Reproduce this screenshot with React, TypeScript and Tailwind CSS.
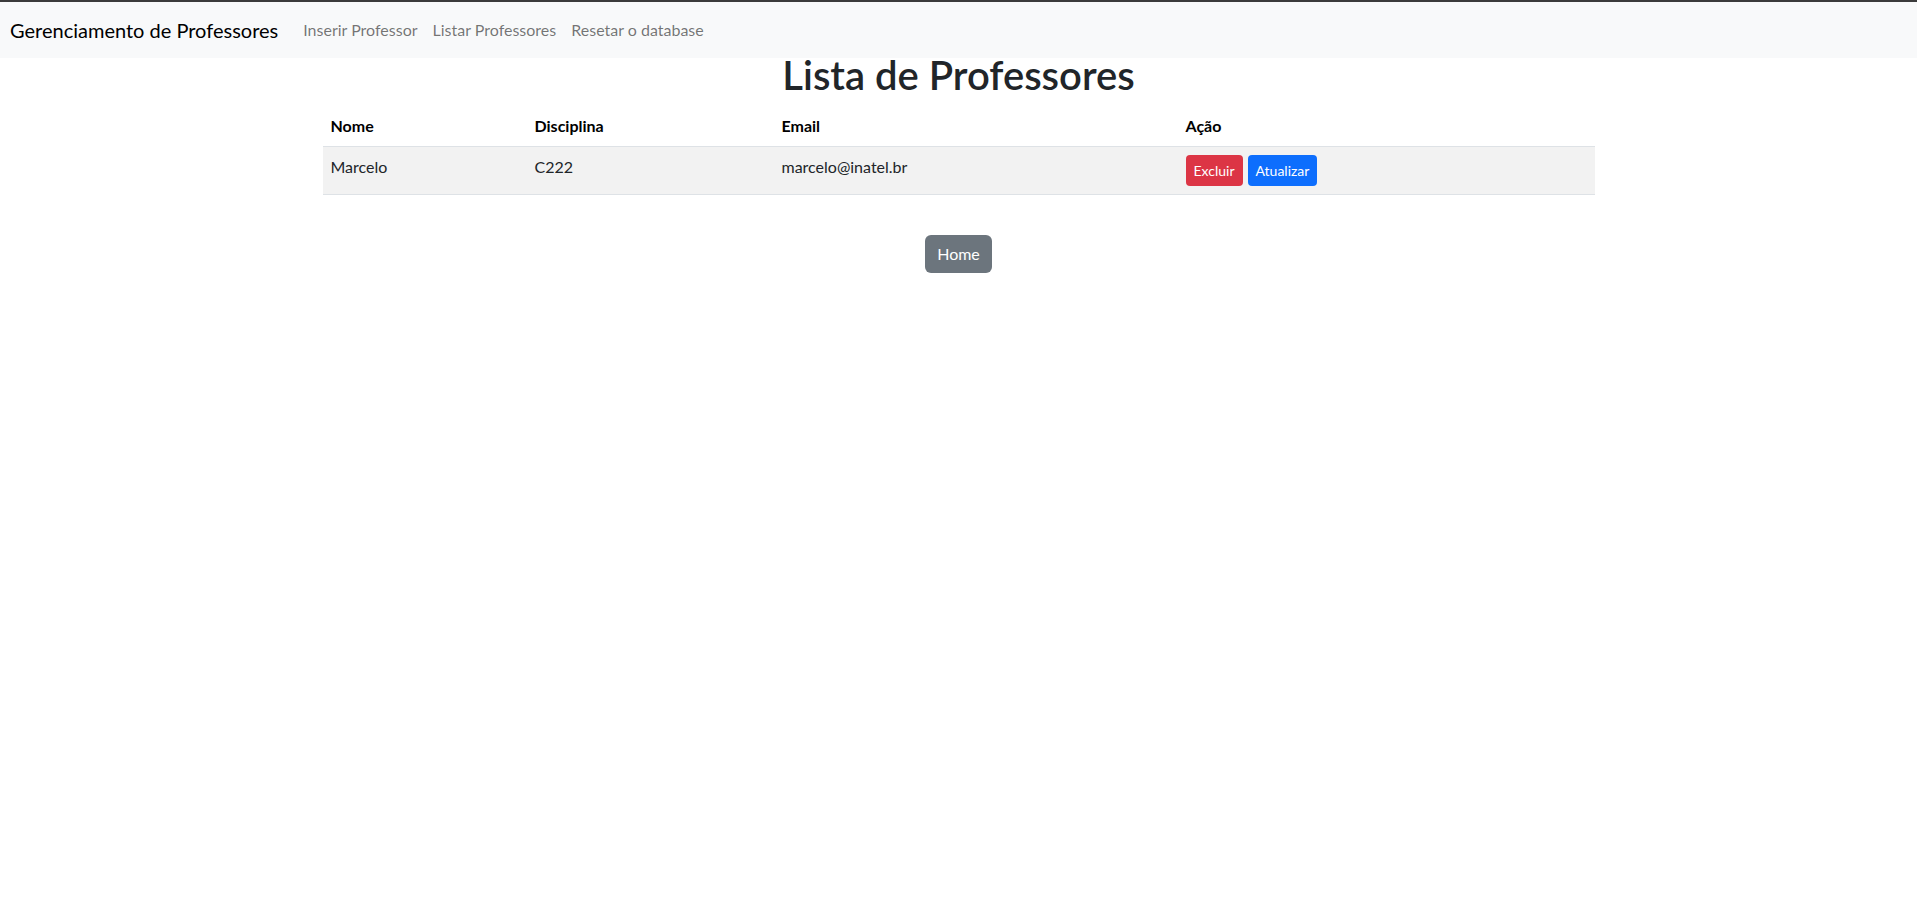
import React from 'react';

const professores = [
  { nome: 'Marcelo', disciplina: 'C222', email: 'marcelo@inatel.br' },
];

export default function App() {
  return (
    <div className="min-h-screen bg-white font-['Lato','Liberation_Sans',sans-serif] text-[#212529]">
      <nav className="h-[58px] border-t-2 border-[#3b3b3b] bg-[#f8f9fa] flex items-center px-[10px]">
        <span className="text-[20px] leading-[30px] text-black mr-[25px]">Gerenciamento de Professores</span>
        <div className="flex items-center gap-[15px] text-[16px] text-black/55">
          <a href="#">Inserir Professor</a>
          <a href="#">Listar Professores</a>
          <a href="#">Resetar o database</a>
        </div>
      </nav>

      <main className="w-[1272px] mx-auto">
        <h1 className="-mt-[7px] mb-[7px] text-center text-[40px] leading-[48px] font-semibold">Lista de Professores</h1>

        <table className="w-full border-collapse text-[16px] leading-6">
          <thead>
            <tr className="border-b border-[#dee2e6] text-black">
              <th className="w-[204px] p-2 text-left font-bold">Nome</th>
              <th className="w-[247px] p-2 text-left font-bold">Disciplina</th>
              <th className="w-[404px] p-2 text-left font-bold">Email</th>
              <th className="p-2 text-left font-bold">Ação</th>
            </tr>
          </thead>
          <tbody>
            {professores.map((p) => (
              <tr key={p.email} className="bg-[#f2f2f2] border-b border-[#dee2e6]">
                <td className="p-2 align-top">{p.nome}</td>
                <td className="p-2 align-top">{p.disciplina}</td>
                <td className="p-2 align-top">{p.email}</td>
                <td className="p-2">
                  <div className="flex gap-[5px]">
                    <button className="h-[31px] px-2 rounded-[4px] bg-[#dc3545] text-white text-[14px]">Excluir</button>
                    <button className="h-[31px] px-2 rounded-[4px] bg-[#0d6efd] text-white text-[14px]">Atualizar</button>
                  </div>
                </td>
              </tr>
            ))}
          </tbody>
        </table>

        <div className="flex justify-center mt-[40px]">
          <button className="h-[38px] px-3 rounded-[6px] bg-[#6c757d] text-white text-[16px]">Home</button>
        </div>
      </main>
    </div>
  );
}
